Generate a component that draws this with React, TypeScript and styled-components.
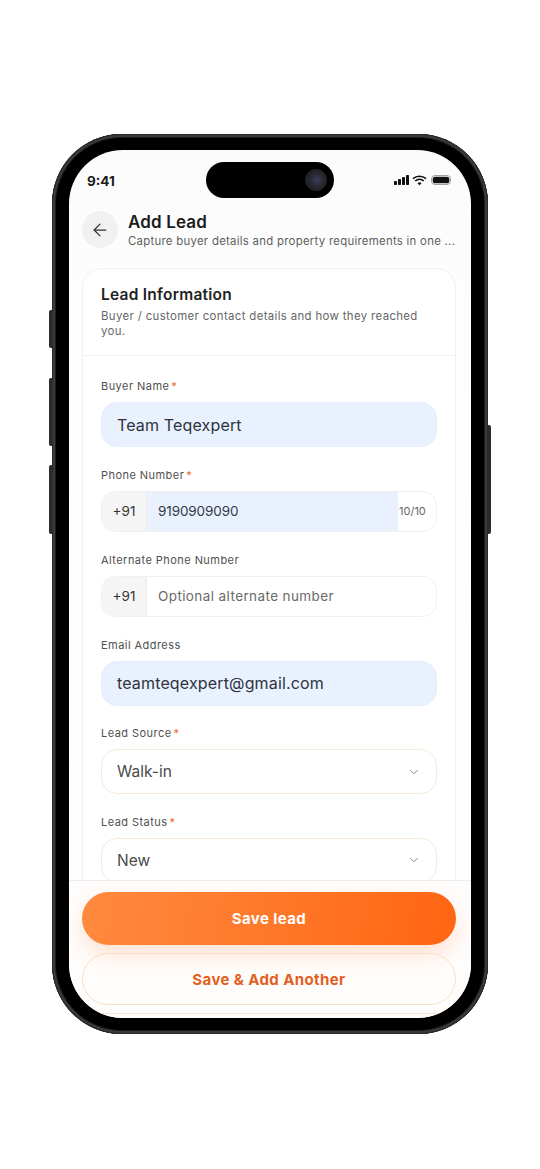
import React from "react";
import styled, { createGlobalStyle } from "styled-components";
import { ArrowLeft, ChevronDown } from "lucide-react";

const Global = createGlobalStyle`
  html, body { margin: 0; padding: 0; background: #fff; }
  body { font-family: Inter, "Noto Sans", sans-serif; overflow: hidden; }
  * { box-sizing: border-box; }
`;
const Page = styled.div`
  width: 540px; height: 1169px; display: flex; justify-content: center; padding-top: 134px; background: #fff;
`;
const Phone = styled.div`
  position: relative; width: 436px; height: 900px; padding: 16px 17px;
  border-radius: 70px; background: #000;
  box-shadow: inset 0 0 0 1px #2a2a2c, inset 0 0 0 3px #3a3a3c, inset 0 0 0 4px #1c1c1e;
`;
const SideButton = styled.div<{ $side: "left" | "right"; $top: number; $height: number }>`
  position: absolute; top: ${(p) => p.$top}px; height: ${(p) => p.$height}px; width: 4px;
  ${(p) => (p.$side === "left" ? "left: -3px; border-radius: 2px 0 0 2px;" : "right: -3px; border-radius: 0 2px 2px 0;")}
  background: #2c2c2e;
`;
const Screen = styled.div`
  position: relative; width: 402px; height: 868px; border-radius: 54px; overflow: hidden;
  background: linear-gradient(180deg, #fbfbfb 0%, #fdfdfd 15%, #fefefe 100%); display: flex; flex-direction: column;
`;
const Island = styled.div`
  position: absolute; left: 137px; top: 12px; width: 128px; height: 36px; border-radius: 18px; background: #000;
`;
const Camera = styled.div`
  position: absolute; right: 7px; top: 7px; width: 22px; height: 22px; border-radius: 50%;
  background: radial-gradient(circle at 55% 50%, #3b3b5c 0%, #26262e 45%, #17171a 100%);
`;
const StatusBar = styled.div`
  flex: none; height: 61px; padding: 15px 20px 0 18px; display: flex; justify-content: space-between; align-items: flex-start;
`;
const Time = styled.span`
  font-size: 13.5px; font-weight: 700; color: #1a1a1a; line-height: 33px;
`;
const StatusIcons = styled.svg`
  width: 57px; height: 12px; margin-top: 9px;
`;
const Header = styled.div`
  flex: none; display: flex; align-items: center; gap: 11px; padding: 0 15px 0 13px; height: 37px;
`;
const BackCircle = styled.div`
  flex: none; width: 36px; height: 37px; border-radius: 50%; background: #f1f1f1; color: #333;
  display: flex; align-items: center; justify-content: center;
`;
const HeaderText = styled.div`
  flex: 1; min-width: 0; padding-top: 2px; margin-left: -1px;
`;
const Title = styled.div`
  font-size: 17px; font-weight: 600; line-height: 21px; color: #1c1c1c; letter-spacing: .15px;
`;
const Subtitle = styled.div`
  font-size: 11.4px; line-height: 16px; color: #5e5e5e; white-space: nowrap; letter-spacing: .27px;
`;
const Body = styled.div`
  flex: 1; min-height: 0; overflow: hidden; padding: 20px 15px 0 13px;
`;
const Card = styled.div`
  border: 1px solid #f0f0f0; border-radius: 20px; background: #fff;
`;
const CardHead = styled.div`
  height: 87px; padding: 16px 18px 0; border-bottom: 1px solid #f1f1f1;
`;
const CardTitle = styled.div`
  font-size: 15.5px; font-weight: 600; line-height: 20px; color: #222; letter-spacing: .25px;
`;
const CardDesc = styled.div`
  margin-top: 4px; font-size: 11.4px; line-height: 15px; color: #666; letter-spacing: .36px;
`;
const Form = styled.div`
  padding: 23px 18px 24px; display: flex; flex-direction: column; gap: 20.5px;
`;
const Field = styled.div`
  display: flex; flex-direction: column; gap: 9px;
`;
const Label = styled.div`
  font-size: 11px; line-height: 14px; font-weight: 400; color: #4f4f4f; letter-spacing: .45px;
`;
const Req = styled.span`
  color: #f0682a; margin-left: 2px;
`;
const TextBox = styled.div<{ $filled?: boolean }>`
  height: 45px; border-radius: 16px; padding: 0 15px; display: flex; align-items: center; font-size: 16px; letter-spacing: .15px;
  color: #2d3440; background: ${(p) => (p.$filled ? "#e9f1fe" : "#fff")};
  border: 1px solid ${(p) => (p.$filled ? "#e6eefb" : "#f0f0f0")};
`;
const SelectBox = styled.div`
  height: 45px; flex: none; border-radius: 16px; padding: 0 15px; display: flex; align-items: center; justify-content: space-between;
  font-size: 15.5px; color: #4a4a4a; background: #fff; border: 1px solid #f6eadb;
  svg { color: #777; }
`;
const PhoneBox = styled.div`
  height: 41.5px; border-radius: 14px; border: 1px solid #f0f0f0; display: flex; overflow: hidden; background: #fff;
`;
const Code = styled.div`
  width: 45px; flex: none; background: #f5f5f5; border-right: 1px solid #ececec; display: flex; align-items: center; justify-content: center;
  font-size: 13.5px; color: #333;
`;
const PhoneValue = styled.div<{ $filled?: boolean }>`
  flex: 1; padding-left: 11px; display: flex; align-items: center; font-size: 13.5px;
  letter-spacing: ${(p) => (p.$filled ? "-0.1px" : ".4px")};
  color: ${(p) => (p.$filled ? "#333a46" : "#6a6a6a")}; background: ${(p) => (p.$filled ? "#e9f1fe" : "transparent")};
`;
const Counter = styled.div`
  flex: none; width: 38px; padding-left: 1px; display: flex; align-items: center; font-size: 11px; color: #666;
`;
const Footer = styled.div`
  flex: none; height: 138px; overflow: hidden; padding: 11px 15px 0 13px; display: flex; flex-direction: column; gap: 8px;
  border-top: 1px solid #eeeeee; background: #fffdfc;
`;
const Primary = styled.div`
  flex: none; height: 53px; border-radius: 27px; display: flex; align-items: center; justify-content: center;
  background: linear-gradient(100deg, #ff8a3f 0%, #ff7a2c 45%, #ff6512 100%); color: #fff; font-size: 15px; font-weight: 700; letter-spacing: .4px;
  box-shadow: 0 10px 22px rgba(255, 120, 50, .2);
`;
const Secondary = styled.div`
  flex: none; height: 52px; border-radius: 27px; display: flex; align-items: center; justify-content: center;
  border: 1px solid #f6dfc5; color: #e2601f; font-size: 15px; font-weight: 700; letter-spacing: .4px; background: transparent;
`;
const ClippedEdge = styled.div`
  flex: none; height: 20px; border-top: 1px solid #f8e4cf;
`;

export default function App() {
  return (
    <Page>
      <Global />
      <Phone>
        <SideButton $side="left" $top={176} $height={38} />
        <SideButton $side="left" $top={244} $height={68} />
        <SideButton $side="left" $top={331} $height={69} />
        <SideButton $side="right" $top={291} $height={109} />
        <Screen>
          <Island><Camera /></Island>
          <StatusBar>
            <Time>9:41</Time>
            <StatusIcons viewBox="0 0 57 12">
              <rect x="0" y="7" width="3" height="4" rx=".7" fill="#111" />
              <rect x="4" y="5" width="3" height="6" rx=".7" fill="#111" />
              <rect x="8" y="3" width="3" height="8" rx=".7" fill="#111" />
              <rect x="12" y="1" width="3" height="10" rx=".7" fill="#111" />
              <path d="M19 4.6a10 10 0 0 1 13 0M21.2 7a6.6 6.6 0 0 1 8.6 0" fill="none" stroke="#111" strokeWidth="1.6" />
              <path d="M23.5 9.2a3 3 0 0 1 4 0L25.5 11.2z" fill="#111" />
              <rect x="37.5" y="1.5" width="19" height="9" rx="3.5" fill="none" stroke="#888" strokeWidth=".8" />
              <rect x="38.7" y="2.7" width="16.6" height="6.6" rx="2.6" fill="#111" />
            </StatusIcons>
          </StatusBar>
          <Header>
            <BackCircle><ArrowLeft size={20} strokeWidth={1.5} /></BackCircle>
            <HeaderText>
              <Title>Add Lead</Title>
              <Subtitle>Capture buyer details and property requirements in one ...</Subtitle>
            </HeaderText>
          </Header>
          <Body>
            <Card>
              <CardHead>
                <CardTitle>Lead Information</CardTitle>
                <CardDesc>Buyer / customer contact details and how they reached you.</CardDesc>
              </CardHead>
              <Form>
                <Field>
                  <Label>Buyer Name<Req>*</Req></Label>
                  <TextBox $filled>Team Teqexpert</TextBox>
                </Field>
                <Field>
                  <Label>Phone Number<Req>*</Req></Label>
                  <PhoneBox>
                    <Code>+91</Code>
                    <PhoneValue $filled>9190909090</PhoneValue>
                    <Counter>10/10</Counter>
                  </PhoneBox>
                </Field>
                <Field>
                  <Label>Alternate Phone Number</Label>
                  <PhoneBox>
                    <Code>+91</Code>
                    <PhoneValue>Optional alternate number</PhoneValue>
                  </PhoneBox>
                </Field>
                <Field>
                  <Label>Email Address</Label>
                  <TextBox $filled>teamteqexpert@gmail.com</TextBox>
                </Field>
                <Field>
                  <Label>Lead Source<Req>*</Req></Label>
                  <SelectBox>Walk-in<ChevronDown size={14} strokeWidth={1.5} /></SelectBox>
                </Field>
                <Field>
                  <Label>Lead Status<Req>*</Req></Label>
                  <SelectBox>New<ChevronDown size={14} strokeWidth={1.5} /></SelectBox>
                </Field>
              </Form>
            </Card>
          </Body>
          <Footer>
            <Primary>Save lead</Primary>
            <Secondary>Save &amp; Add Another</Secondary>
            <ClippedEdge />
          </Footer>
        </Screen>
      </Phone>
    </Page>
  );
}
